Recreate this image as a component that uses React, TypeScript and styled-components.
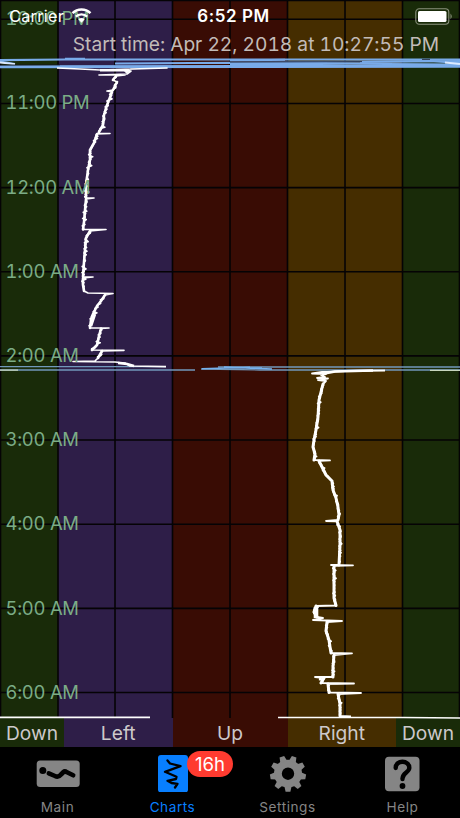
import React from "react";
import styled, { createGlobalStyle } from "styled-components";

const GlobalStyle = createGlobalStyle`
  * { box-sizing: border-box; }
  body { margin: 0; background: #000; font-family: Inter, "Liberation Sans", sans-serif; }
`;

const Screen = styled.main`
  width: 460px;
  height: 818px;
  display: flex;
  flex-direction: column;
  overflow: hidden;
  background: #000;
`;

const Chart = styled.section`
  position: relative;
  height: 747px;
  display: flex;
  flex-direction: column;
`;

const Bands = styled.div<{ $columns: string; $height: number }>`
  display: grid;
  grid-template-columns: ${(p) => p.$columns};
  grid-template-rows: 100%;
  height: ${(p) => p.$height}px;
`;

const Band = styled.div<{ $color: string }>`
  display: flex;
  align-items: center;
  justify-content: center;
  background: ${(p) => p.$color};
  color: #cdc9cb;
  font-size: 19.2px;
  line-height: 27px;
  padding-top: 1px;
`;

const Plot = styled.svg`
  position: absolute;
  inset: 0;
`;

const Hours = styled.div`
  position: absolute;
  left: 5.5px;
  top: -23.9px;
  display: grid;
  grid-auto-rows: 84.2px;
  align-items: center;
`;

const Hour = styled.span`
  color: #7bac86;
  font-size: 18.4px;
  font-variant-numeric: tabular-nums;
  letter-spacing: -0.25px;
  line-height: 24px;
  white-space: nowrap;
`;

const Header = styled.header`
  position: absolute;
  inset: 0 0 auto;
  display: flex;
  flex-direction: column;
`;

const StatusBar = styled.div`
  display: grid;
  grid-template-columns: 1fr auto 1fr;
  align-items: center;
  height: 32px;
  padding: 0 6px 0 9px;
  color: #fff;
`;

const Carrier = styled.div`
  display: flex;
  align-items: center;
  gap: 7px;
  font-size: 16.4px;
  letter-spacing: 0.2px;
`;

const Clock = styled.time`
  padding-left: 4px;
  font-size: 17px;
  font-weight: 600;
  letter-spacing: 0.55px;
`;

const Battery = styled.svg`
  justify-self: end;
`;

const StartTime = styled.div`
  align-self: flex-end;
  padding-right: 21px;
  color: #c2bbb8;
  font-size: 19.2px;
  font-variant-numeric: tabular-nums;
  letter-spacing: -0.02px;
  line-height: 24px;
  white-space: nowrap;
`;

const TabBar = styled.nav`
  display: grid;
  grid-template-columns: repeat(4, 1fr);
  height: 71px;
  background: #000;
`;

const Tab = styled.div<{ $active?: boolean }>`
  position: relative;
  display: flex;
  flex-direction: column;
  align-items: center;
  padding-top: 7px;
  color: ${(p) => (p.$active ? "#087fff" : "#858585")};
`;

const TabLabel = styled.span`
  margin-top: 6px;
  font-size: 13.6px;
  line-height: 18px;
  letter-spacing: 0.55px;
`;

const Badge = styled.span`
  position: absolute;
  left: 72px;
  top: 4px;
  width: 46px;
  height: 26px;
  border-radius: 13px;
  background: #ff3b30;
  color: #fff;
  font-size: 18.6px;
  line-height: 26px;
  text-align: center;
  z-index: 1;
`;

type Point = [number, number];

const leftTrace: Point[] = [
  [57, 68], [80, 69], [100, 70], [167, 68], [131, 69], [125, 71], [131, 71], [127, 74],
  [99, 75], [125, 75], [116, 76], [113, 80], [117, 82], [113, 90], [107, 91], [112, 92],
  [109, 100], [106, 108], [104, 115], [103, 125], [99, 132], [98, 133.5], [110, 133.5],
  [97, 134], [94, 143], [90, 150], [90, 160], [88, 170], [86, 185], [86, 198], [94, 198],
  [86, 199], [85, 210], [84, 222], [83, 229.5], [106, 229.5], [90, 231], [86, 238], [85, 250],
  [84, 262], [83, 277], [93, 277], [83, 278], [83, 285], [84, 291], [88, 293], [113, 293.5],
  [105, 295], [101, 301], [97, 306], [93, 314], [91, 320], [90, 328], [109, 328], [101, 328.5],
  [99, 336], [97, 345], [92, 350], [124, 350.3], [102, 351], [98, 358], [95, 361],
  [73, 361.5], [115, 362], [125, 363], [130, 366], [166, 366.7],
];

const rightTrace: Point[] = [
  [385, 370.5], [345, 371], [327, 372], [322, 372], [312, 373.5], [326, 374], [321, 375],
  [325, 377], [317, 378], [328, 378.5], [318, 380], [326, 381], [323, 384], [321, 392], [319, 400],
  [318, 417], [316, 430], [314, 440], [313, 447], [315, 454], [314, 460], [330, 460.4],
  [319, 461], [322, 467], [326, 475], [332, 481], [333, 490], [336, 498], [338, 507], [339, 515],
  [338, 520], [326, 521], [337, 521.3], [340, 530], [340, 545], [339, 565], [331, 565],
  [353, 565.3], [334, 566], [334, 584], [334, 598], [336, 605.5], [316, 606], [314, 612],
  [317, 617], [323, 618], [313, 620], [342, 621], [327, 622], [326, 631], [329, 640],
  [330, 647], [331, 653], [352, 653.4], [334, 655], [333, 667], [333, 677], [315, 677],
  [324, 678], [321, 683], [354, 683.5], [328, 684], [329, 692.5], [361, 693], [338, 694],
  [340, 704], [340, 716], [351, 716.5],
];

// Adds the fine sensor noise along the steep parts of a trace.
const tracePath = (points: Point[], noise: number) => {
  const out: Point[] = [];
  let n = 0;
  points.forEach((p, i) => {
    if (i > 0) {
      const q = points[i - 1];
      const dy = p[1] - q[1];
      const steps = dy > 3 ? Math.floor(dy / 1.1) : 0;
      for (let k = 1; k < steps; k++) {
        n++;
        const t = k / steps;
        const jitter = Math.sin(n * 2.4) + Math.sin(n * 1.13) * 0.6 + (n % 7 === 0 ? 1.8 : 0);
        out.push([q[0] + (p[0] - q[0]) * t + jitter * noise, q[1] + dy * t]);
      }
    }
    out.push(p);
  });
  return "M" + out.map(([x, y]) => `${x.toFixed(1)} ${y.toFixed(1)}`).join("L");
};

// The same trace without its near-horizontal spikes, drawn heavier as the core of the line.
const corePath = (points: Point[]) =>
  points
    .slice(1)
    .map((p, i) => [points[i], p])
    .filter(([a, b]) => b[1] - a[1] > 3)
    .map(([a, b]) => `M${a[0]} ${a[1]}L${b[0]} ${b[1]}`)
    .join("");

const verticals = [0.5, 58, 115, 172.5, 230, 287.5, 345, 402.5, 459.5];
const horizontals = Array.from({ length: 9 }, (_, i) => 19.3 + i * 84.15);

const PlotLines = () => (
  <Plot width="460" height="747" viewBox="0 0 460 747" fill="none">
    <g stroke="#050305" strokeWidth="1.6">
      {verticals.map((x) => <path key={x} d={`M${x} 0V718`} />)}
      {horizontals.map((y) => <path key={y} d={`M0 ${y}H460`} />)}
      <path d="M0 .5H460" />
    </g>
    <g stroke="#79abe9">
      <path d="M0 60.2 65 59.5H460" strokeWidth="2.2" />
      <path d="M0 66.7 460 66.3" strokeWidth="2.9" />
      <path d="M0 61.5 15 64M115 63.4 230 62.8 460 61M230 64.8 350 63.8 460 64.5" strokeWidth="2" />
      <path d="M65 58.8H85M230 60.5 285 59.8M360 62 430 61 460 63" strokeWidth="2" />
    </g>
    <path d="M0 62.5 15 64.2M445 62.5 460 64" stroke="#dceaff" strokeWidth="1.8" />
    <path d="M230 62.1 362 61.6M0 65.1 60 64.8M430 59.4H422" stroke="#171724" strokeWidth=".8" />
    <g stroke="#7198bb" strokeWidth="1.3">
      <path d="M0 366.7H166M0 370H195M201 369 260 370H460M218 367H460" />
    </g>
    <path d="M202 368.8 250 367.2M224 367 272 369M238 368H262" stroke="#76b1ed" strokeWidth="1.6" />
    <path d="M0 370.2H18M430 370.3H460" stroke="#c8d6bf" strokeWidth="1.3" />
    <g stroke="#fff" strokeLinejoin="round">
      <path d={tracePath(leftTrace, 1)} strokeWidth="1.7" />
      <path d={corePath(leftTrace)} strokeWidth="2.6" strokeLinecap="round" />
      <path d={tracePath(rightTrace, 0.7)} strokeWidth="1.8" />
      <path d={corePath(rightTrace)} strokeWidth="3" strokeLinecap="round" />
      <path d="M100 70.2H128L126 73M118 363 127 364 134 366M322 374 335 371.5 373 370.5" strokeWidth="2.6" />
      <path d="M315 607V618M317 606V618M95 314 91 326M319 679 324 680" strokeWidth="2.6" />
      <path d="M0 717.3H150M278 717.5H403L460 718" strokeWidth="1.7" />
    </g>
  </Plot>
);

const MainIcon = () => (
  <svg width="44" height="38" viewBox="0 0 44 38">
    <rect x=".7" y="6.5" width="43" height="26.5" rx="3.5" fill="currentColor" />
    <circle cx="6.8" cy="16.5" r="3.5" fill="#000" />
    <path d="M12.8 19.4 19 22Q22.3 23.8 25 20.5L27.5 18Q28.8 16.8 31 18.3L37.2 21.3" fill="none" stroke="#000" strokeWidth="4.6" strokeLinecap="round" strokeLinejoin="round" />
  </svg>
);

const ChartsIcon = () => (
  <svg width="30" height="38" viewBox="0 0 30 38">
    <rect y="1" width="30" height="37.5" rx="3" fill="currentColor" />
    <path d="M9.5 6.5 12 9.5 22.5 12.2 7 17.8 18.5 22.8 18 25 9.5 26.8 13.5 29 19.5 29.8 17 33.5" fill="none" stroke="#000" strokeWidth="2.3" strokeLinejoin="round" strokeLinecap="round" />
  </svg>
);

const SettingsIcon = () => (
  <svg width="38" height="38" viewBox="-19 -19.7 38 38">
    <path
      fillRule="evenodd"
      fill="currentColor"
      d="M0-14A14 14 0 1 0 0 14 14 14 0 1 0 0-14M0-6.2A6.2 6.2 0 1 1 0 6.2 6.2 6.2 0 1 1 0-6.2"
    />
    {Array.from({ length: 9 }, (_, i) => (
      <path key={i} d="M-3.6-12.5-2.4-18H2.4L3.6-12.5Z" fill="currentColor" transform={`rotate(${20 + i * 40})`} />
    ))}
  </svg>
);

const HelpIcon = () => (
  <svg width="35" height="38" viewBox="0 0 35 38">
    <rect y="2.8" width="34.5" height="34.5" rx="4" fill="currentColor" />
    <path d="M10.7 14C10.5 5.5 24.5 5.8 24.3 14 24.2 18.5 17.5 18.5 17.5 24.5V25" fill="none" stroke="#000" strokeWidth="4.4" strokeLinecap="round" />
    <circle cx="17.5" cy="32" r="2.9" fill="#000" />
  </svg>
);

const hours = ["10:00 PM", "11:00 PM", "12:00 AM", "1:00 AM", "2:00 AM", "3:00 AM", "4:00 AM", "5:00 AM", "6:00 AM"];

const positions = [
  { name: "Down", color: "#192b09" },
  { name: "Left", color: "#2e1e48" },
  { name: "Up", color: "#390c04" },
  { name: "Right", color: "#452d00" },
  { name: "Down", color: "#192b09" },
];

const tabs = [
  { name: "Main", icon: <MainIcon /> },
  { name: "Charts", icon: <ChartsIcon />, badge: "16h" },
  { name: "Settings", icon: <SettingsIcon /> },
  { name: "Help", icon: <HelpIcon /> },
];

export default function App() {
  return (
    <Screen>
      <GlobalStyle />
      <Chart>
        <Bands $columns="57.5px 115px 115px 115px 57.5px" $height={718}>
          {positions.map((p, i) => <Band key={i} $color={p.color} />)}
        </Bands>
        <Bands $columns="64px 108.5px 115px 108.5px 64px" $height={29}>
          {positions.map((p, i) => <Band key={i} $color={p.color}>{p.name}</Band>)}
        </Bands>
        <PlotLines />
        <Hours>
          {hours.map((h) => <Hour key={h}>{h}</Hour>)}
        </Hours>
        <Header>
          <StatusBar>
            <Carrier>
              Carrier
              <svg width="21" height="16" viewBox="0 0 21 16" fill="none" stroke="#fff">
                <path d="M1.5 5.2C6.5.2 14.5.2 19.5 5.2" strokeWidth="2.4" />
                <path d="M4.8 8.7C8 5.7 13 5.7 16.2 8.7" strokeWidth="2.3" />
                <path d="M7.3 11.2Q10.5 8.7 13.7 11.2L10.5 14.8Z" fill="#fff" stroke="none" />
              </svg>
            </Carrier>
            <Clock>6:52 PM</Clock>
            <Battery width="39" height="17" viewBox="0 0 39 17">
              <rect x=".8" y=".8" width="33" height="15.4" rx="3.5" fill="none" stroke="#8b927e" strokeWidth="1.1" />
              <rect x="3" y="3" width="28.5" height="11" rx="1.6" fill="#fff" />
              <path d="M35.5 5.5Q38 8.5 35.5 11.2Z" fill="#8b927e" />
            </Battery>
          </StatusBar>
          <StartTime>Start time: Apr 22, 2018 at 10:27:55 PM</StartTime>
        </Header>
      </Chart>
      <TabBar>
        {tabs.map((t) => (
          <Tab key={t.name} $active={t.name === "Charts"}>
            {t.icon}
            {t.badge && <Badge>{t.badge}</Badge>}
            <TabLabel>{t.name}</TabLabel>
          </Tab>
        ))}
      </TabBar>
    </Screen>
  );
}
